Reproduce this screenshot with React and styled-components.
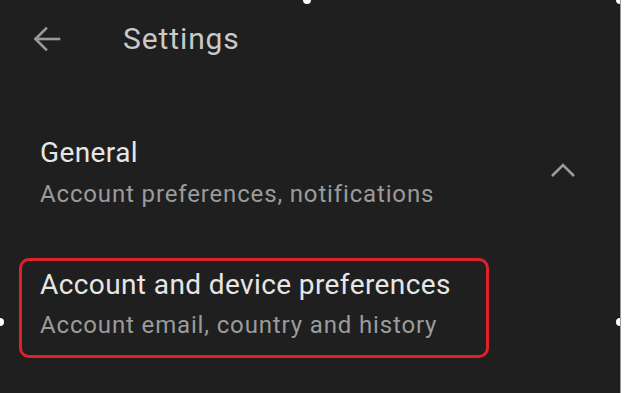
import React from "react";
import styled, { createGlobalStyle } from "styled-components";

const Global = createGlobalStyle`
  html, body { margin: 0; padding: 0; background: #ffffff; }
  body { font-family: Roboto, "Noto Sans", sans-serif; }
`;

const Screen = styled.div`
  position: relative;
  width: 621px;
  height: 393px;
  background: #1f1f1f;
  border-right: 1px solid #9a9a9a;
  box-sizing: border-box;
  overflow: hidden;
`;

const TopBar = styled.div`
  display: flex;
  align-items: center;
  height: 78px;
  padding-left: 33px;
`;

const BackButton = styled.div`
  width: 28px;
  height: 28px;
  display: flex;
  align-items: center;
  justify-content: center;
  color: #9a9a9a;
`;

const Title = styled.h1`
  margin: 0 0 0 62px;
  font-size: 30px;
  font-weight: 400;
  color: #c9c9c9;
  letter-spacing: 0.9px;
  line-height: 36px;
`;

const Section = styled.div`
  display: flex;
  align-items: center;
  justify-content: space-between;
  padding: 58px 44px 0 40px;
`;

const TextBlock = styled.div`
  display: flex;
  flex-direction: column;
  gap: ${(p) => p.$gap || 8}px;
`;

const Heading = styled.div`
  font-size: 28px;
  color: #e6e6e6;
  line-height: 34px;
  letter-spacing: 0.4px;
`;

const Sub = styled.div`
  font-size: 24px;
  color: #9b9b9b;
  line-height: 30px;
  letter-spacing: 0.85px;
`;

const Chevron = styled.div`
  color: #9a9a9a;
  display: flex;
  margin-top: -6px;
`;

const Highlight = styled.div`
  margin: 49px 0 0 19px;
  width: 470px;
  height: 100px;
  box-sizing: border-box;
  border: 3px solid #e1202b;
  border-radius: 10px;
  padding: 7px 0 0 18px;
`;

const Handle = styled.div`
  position: absolute;
  width: 8px;
  height: 8px;
  border-radius: 50%;
  background: #ffffff;
  left: ${(p) => p.$x}px;
  top: ${(p) => p.$y}px;
`;

export default function App() {
  return (
    <>
      <Global />
      <Screen>
        <TopBar>
          <BackButton>
            <svg width="28" height="28" viewBox="0 0 28 28" fill="none" stroke="currentColor" strokeWidth="2.6" strokeLinecap="square">
              <path d="M26 14H3" />
              <path d="M13 3.5L2.5 14L13 24.5" />
            </svg>
          </BackButton>
          <Title>Settings</Title>
        </TopBar>
        <Section>
          <TextBlock $gap={9}>
            <Heading>General</Heading>
            <Sub>Account preferences, notifications</Sub>
          </TextBlock>
          <Chevron>
            <svg width="26" height="16" viewBox="0 0 26 16" fill="none" stroke="currentColor" strokeWidth="2.6">
              <path d="M2 14L13 3L24 14" />
            </svg>
          </Chevron>
        </Section>
        <Highlight>
          <TextBlock $gap={8}>
            <Heading>Account and device preferences</Heading>
            <Sub>Account email, country and history</Sub>
          </TextBlock>
        </Highlight>
        <Handle $x={303} $y={-4} />
        <Handle $x={616} $y={-4} />
        <Handle $x={-4} $y={318} />
        <Handle $x={616} $y={318} />
      </Screen>
    </>
  );
}
